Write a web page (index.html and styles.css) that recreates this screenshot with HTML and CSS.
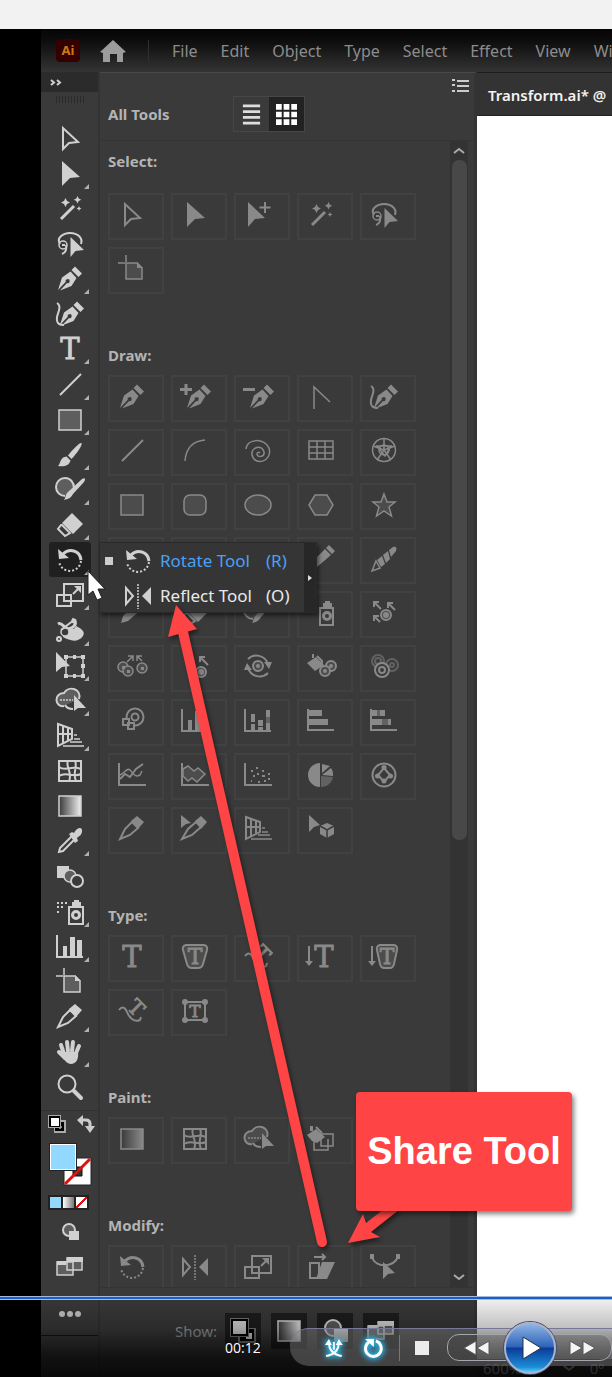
FILE: index.html
```html
<!DOCTYPE html>
<html lang="en">
<head>
    <meta charset="UTF-8">
    <meta name="viewport" content="width=device-width, initial-scale=1.0">
    <title>Transform.ai</title>
    <link rel="stylesheet" href="styles.css">
</head>
<body>

    <svg class="defs" aria-hidden="true">
        <linearGradient id="fade"><stop offset="0" stop-color="#3a3a3a"/><stop offset="1" stop-color="#f0f0f0"/></linearGradient>
        <linearGradient id="fade-dim"><stop offset="0" stop-color="#3a3a3a"/><stop offset="1" stop-color="#8a8a8a"/></linearGradient>
    </svg>

    <!-- icon set, every icon is drawn on a 28x28 grid -->
    <svg class="sprite" aria-hidden="true">
        <symbol id="i-direct" viewBox="0 0 28 28"><path class="s w2" d="M7 3v21l6-6 9-1z"/></symbol>
        <symbol id="i-select" viewBox="0 0 28 28"><path class="f" d="M6 1v25l8-8 10-1z"/></symbol>
        <symbol id="i-group" viewBox="0 0 28 28"><path class="f" d="M4 1v25l7-8 10-1z"/><path class="s w2" d="M21 1v11M15.500 6.500h11"/></symbol>
        <symbol id="i-wand" viewBox="0 0 28 28"><path class="s w3" d="M5 24 18 11"/><path class="f" d="M9.500 3l1.500 3 3 1.500-3 1.500-1.500 3-1.500-3-3-1.500 3-1.500zM21.500 1l1.200 2.500 2.500 1.200-2.500 1.200-1.200 2.500-1.200-2.500-2.500-1.200 2.500-1.200zM23 11l.8 1.700 1.700.8-1.700.8-.8 1.700-.8-1.700-1.700-.8 1.700-.8z"/></symbol>
        <symbol id="i-lasso" viewBox="0 0 28 28"><path class="s w2" d="M4 14C0 8 7 3 14 3c8 0 13 5 11 11"/><circle class="s" cx="7" cy="15" r="4"/><path class="s w2" d="M10 15c1 5-1 8-4 9M6 15h3"/><path class="f" d="M14.500 7v20l5-6 8.500-1z"/></symbol>
        <symbol id="i-pen" viewBox="0 0 28 28"><path class="f" d="M2 25l4-12.500 8.500-6L20.500 13l-5 8L4 25.500l7-7.500a2 2 0 1 0-1.200-1.200zM15.500 5 19 1.500l7 7-3.500 3.500z"/></symbol>
        <symbol id="i-addpen" viewBox="0 0 28 28"><path class="s w3" d="M5 1v11M-1 6.500h12"/><use href="#i-pen" x="4" width="28" height="28"/></symbol>
        <symbol id="i-delpen" viewBox="0 0 28 28"><path class="s w3" d="M-1 6.500h12"/><use href="#i-pen" x="4" width="28" height="28"/></symbol>
        <symbol id="i-anchor" viewBox="0 0 28 28"><path class="s" d="M7 26V4l16 15"/></symbol>
        <symbol id="i-curve" viewBox="0 0 28 28"><path class="s w2" d="M1 3c5 3 1 9 0 14-1 7 3 8 7 8"/><use href="#i-pen" x="2" width="28" height="28"/></symbol>
        <symbol id="i-type" viewBox="0 0 28 28"><text class="t" x="14" y="24" font-size="29">T</text></symbol>
        <symbol id="i-line" viewBox="0 0 28 28"><path class="s w2" d="M4 24 25 3"/></symbol>
        <symbol id="i-arc" viewBox="0 0 28 28"><path class="s" d="M4 24C5 11 12 4 24 3"/></symbol>
        <symbol id="i-spiral" viewBox="0 0 28 28"><path class="s" d="M2 12C3 1 21 1 25 11c4 13-14 19-17 7-1-8 10-11 12-3 1 5-7 6-7 2 0-2 2-2 3-1"/></symbol>
        <symbol id="i-grid" viewBox="0 0 28 28"><path class="s" d="M2 4h24v18H2zM10 4v18M18 4v18M2 10h24M2 16h24"/></symbol>
        <symbol id="i-polar" viewBox="0 0 28 28"><circle class="s" cx="14" cy="13" r="11.500"/><circle class="s" cx="14" cy="13" r="5"/><path class="s" d="M14 13V1M14 13 3 9M14 13l11-4M14 13 7 23M14 13l7 10M7 9l14 0-6 10z"/></symbol>
        <symbol id="i-rect" viewBox="0 0 28 28"><path class="s tint" d="M3 4h22v20H3z"/></symbol>
        <symbol id="i-round" viewBox="0 0 28 28"><rect class="s tint" x="3" y="4" width="22" height="20" rx="6"/></symbol>
        <symbol id="i-ellipse" viewBox="0 0 28 28"><ellipse class="s tint" cx="14" cy="14" rx="13" ry="10"/></symbol>
        <symbol id="i-poly" viewBox="0 0 28 28"><path class="s tint" d="M2 14 8 4h12l6 10-6 10H8z"/></symbol>
        <symbol id="i-star" viewBox="0 0 28 28"><path class="s tint" d="M14 3l3 8h8l-6 5 2.500 9-7.500-5-7.500 5L9 16l-6-5h8z"/></symbol>
        <symbol id="i-brush" viewBox="0 0 28 28"><path class="f" d="M25.500 2c1.500 1.500-5 11-10 16L12 14.500C17 8 24 1 25.500 2zM10.500 15.500l4 4C13 25 8 26 2 25c3-3 2-9 8.500-9.500z"/></symbol>
        <symbol id="i-blob" viewBox="0 0 28 28"><path class="s w2 tint" d="M18 12C18 6 14 2 9 2S0 6 0 11s4 9 9 9"/><path class="f" d="M26 3c3-2 4 0 2 3L17 18c-2 4-5 5-9 6 2-3 1-5 4-8z"/></symbol>
        <symbol id="i-eraser" viewBox="0 0 28 28"><path class="f" d="M16 2 27 13 17 23 6 12z"/><path class="s w2" d="M5 14l-3 4 7 7 5-3-8-8z"/></symbol>
        <symbol id="i-pencil" viewBox="0 0 28 28"><path class="f" d="M18 4l6 6-14 12-7 2 2-7zM19 3l3-3 6 6-3 3z"/></symbol>
        <symbol id="i-crayon" viewBox="0 0 28 28"><path class="f" d="M23 2c3-1 4 0 3 4l-5 6-2-7zM18 6l2 8-4 4-3-8zM12 11l3 8-4 3-4-7z"/><path class="s" d="M6 16l4 7-8 3z"/></symbol>
        <symbol id="i-rotate" viewBox="0 0 28 28"><path class="s w3" d="M7 8c6-6 17-4 18 6"/><path class="f" d="M2 3l1 10 10-1z"/><path class="s w2 dots" d="M25 15c-2 13-19 13-22 1"/></symbol>
        <symbol id="i-reflect" viewBox="0 0 28 28"><path class="s w2" d="M2 6v16l7-8z"/><path class="f" d="M27 5v18l-9-9z"/><path class="s thin" d="M14 2v25"/></symbol>
        <symbol id="i-scale" viewBox="0 0 28 28"><path class="s w2" d="M8 3h19v17H8zM1 14h14v11H1z"/><path class="s w2" d="M17 13l6-6"/><path class="f" d="M18 5h7v7z"/></symbol>
        <symbol id="i-puppet" viewBox="0 0 28 28"><path class="s w3" d="M2 7c5-3 7 9 15 3 5-4 1-7-1-8"/><path class="f" d="M8 14c5-6 9 2 12-5 4 2 10 5 7 10-5 7-13 5-20 1z"/><circle class="s hole" cx="9" cy="15" r="4"/><path class="s w2" d="M5 13 18 3"/><circle class="f" cx="18" cy="4" r="2.500"/><circle class="s w2" cx="3" cy="22" r="2"/></symbol>
        <symbol id="i-free" viewBox="0 0 28 28"><path class="s" d="M10 5h17v19H10z"/><path class="f" d="M8 3h4v4H8zM17 3h3v4h-3zM25 3h4v4h-4zM25 12h4v4h-4zM25 22h4v4h-4zM17 22h3v4h-3zM8 22h4v4H8zM0 0v20l6-5 8-1z"/></symbol>
        <symbol id="i-builder" viewBox="0 0 28 28"><path class="s w2 tint" d="M8 19c-9 2-11-13 0-13 5-8 18-4 15 6M9 18c2 4 5 4 8 4"/><path class="s thin" d="M4 13h13"/><path class="f" d="M18 8v16l4-3 8 0z"/></symbol>
        <symbol id="i-persp" viewBox="0 0 28 28"><path class="s w2" d="M2 2v22l14-7V7zM7 4v17M12 6v12M2 12h14"/><path class="s" d="M18 13h3M18 17h6M14 20h12M7 24h21"/></symbol>
        <symbol id="i-mesh" viewBox="0 0 28 28"><path class="s w2" d="M3 4h22v20H3zM12 4c-3 5 5 12 1 20M19 4c3 6-3 12 1 20M3 10c7 5 12-2 22 2M3 19c7-5 14 2 22-2"/></symbol>
        <symbol id="i-gradient" viewBox="0 0 28 28"><path class="s ramp" d="M3 4h22v20H3z"/></symbol>
        <symbol id="i-dropper" viewBox="0 0 28 28"><path class="s w2" d="M16 9 4 21l-1 4 4-1L19 12z"/><path class="f" d="M13 7l3-2 2 1c3-6 9-7 8-1-1 4-3 4-5 6l1 3-3 2z"/></symbol>
        <symbol id="i-blend" viewBox="0 0 28 28"><path class="f" d="M1 3h12v12H1z"/><circle class="s mid" cx="14" cy="13" r="6"/><circle class="s w2 hole" cx="21" cy="18" r="6"/></symbol>
        <symbol id="i-spray" viewBox="0 0 28 28"><path class="s w2" d="M13 9h14v17H13z"/><circle class="s w3" cx="20" cy="17" r="3.500"/><path class="f" d="M16 4h2V2h5v2h2v4h-9z"/><path class="f" d="M1 4h2v2H1zM5 4h2v2H5zM9 4h2v2H9zM1 8h2v2H1zM5 8h2v2H5zM1 13h2v2H1z"/></symbol>
        <symbol id="i-bottle" viewBox="0 0 28 28"><path class="s w2" d="M13 9h13v17H13z"/><circle class="s w3" cx="20" cy="17" r="3.500"/><path class="f" d="M16 4h2V2h5v2h2v4h-9z"/></symbol>
        <symbol id="i-column" viewBox="0 0 28 28"><path class="s w2" d="M1 2v22h26"/><path class="f" d="M7 13h4v11H7zM14 4h5v20h-5zM21 7h5v17h-5z"/></symbol>
        <symbol id="i-stackcol" viewBox="0 0 28 28"><path class="s w2" d="M1 2v22h26"/><path class="f" d="M7 7h4v8H7zM7 17h4v7H7zM14 13h5v6h-5zM14 20h5v4h-5zM22 3h4v7h-4zM22 16h4v8h-4z"/><path class="f half" d="M22 10h4v6h-4z"/></symbol>
        <symbol id="i-bar" viewBox="0 0 28 28"><path class="s w2" d="M1 2v21h26"/><path class="f" d="M2 3h13v6H2zM2 12h19v6H2z"/></symbol>
        <symbol id="i-stackbar" viewBox="0 0 28 28"><path class="s w2" d="M1 2v21h26"/><path class="f" d="M2 3h5v6H2zM10 3h5v6h-5zM2 12h10v6H2zM18 12h3v6h-3z"/><path class="f half" d="M7 3h3v6H7zM12 12h6v6h-6z"/></symbol>
        <symbol id="i-linegraph" viewBox="0 0 28 28"><path class="s w2" d="M1 2v22h27M2 18l5-5 5 3 6-8 7-5"/><path class="s" d="M2 14c5-2 7-8 10-5s5 8 10 5l2-4"/></symbol>
        <symbol id="i-area" viewBox="0 0 28 28"><path class="s w2" d="M1 2v22h27"/><path class="s mid" d="M2 8l5-3 6 5 4-3 7 6-8 8-5-4-4 3-5-5z"/></symbol>
        <symbol id="i-scatter" viewBox="0 0 28 28"><path class="s w2" d="M1 2v22h27"/><path class="f" d="M7 9h2v2H7zM12 6h2v2h-2zM18 9h2v2h-2zM9 14h2v2H9zM18 14h3v2h-3zM13 12h2v2h-2zM24 12h2v2h-2zM14 20h2v2h-2zM7 19h1v2H7zM20 19h2v2h-2zM24 17h2v2h-2z"/></symbol>
        <symbol id="i-pie" viewBox="0 0 28 28"><path class="f" d="M13 2v24A12 12 0 0 1 13 2zM15 12V3l8 2z"/><path class="f" d="M15 14l9-7c2 3 2 5 2 8z"/><path class="f half" d="M14 15l12 1c-1 6-6 10-12 10z"/></symbol>
        <symbol id="i-radar" viewBox="0 0 28 28"><circle class="s w2" cx="14" cy="14" r="11.500"/><path class="s w2" d="M14 7l6 7-6 7-6-7z"/><circle class="f" cx="14" cy="6.500" r="2.500"/><circle class="f" cx="20.500" cy="15" r="2.500"/><circle class="f" cx="14" cy="20" r="2.500"/><circle class="f" cx="7.500" cy="15" r="2.500"/></symbol>
        <symbol id="i-artboard" viewBox="0 0 28 28"><path class="s" d="M8 0v7M0 8h7"/><path class="s tint" d="M8 8h11l5 5v11H8z"/><path class="f" d="M19 7v6h6z"/></symbol>
        <symbol id="i-slice" viewBox="0 0 28 28"><path class="s w2" d="M14 7 7 14 2 24l10-4 8-7z"/><path class="f" d="M13 6l6-5 7 6-6 7z"/></symbol>
        <symbol id="i-slicesel" viewBox="0 0 28 28"><path class="f" d="M0 0v13l5-4 5-1z"/><path class="s w2" d="M15 7 7 14 1 24l10-4 9-8z"/><path class="f" d="M14 6l6-5 6 6-6 7z"/></symbol>
        <symbol id="i-hand" viewBox="0 0 28 28"><path class="s w4" d="M8 16 5 7M12 13 11 4M16 13l1-9M20 15l3-7M9 20l-6-6"/><path class="f" d="M6 14h16c1 7-2 12-7 12-4 0-7-4-9-8z"/></symbol>
        <symbol id="i-zoom" viewBox="0 0 28 28"><circle class="s w2" cx="11" cy="11" r="8.500"/><path class="s w4" d="M18 18l7 7"/></symbol>
        <symbol id="i-symbols" viewBox="0 0 28 28"><g class="s"><circle class="mid" cx="5" cy="14" r="5"/><circle class="mid" cx="10" cy="18" r="5"/><circle class="mid" cx="24" cy="15" r="5"/><path d="M9 9l6-6M10 3h5v5M24 8l-5-5M19 8V3h5"/></g><path class="f" d="M4 13h3v3H4zM9 17h3v3H9zM23 14h3v3h-3z"/></symbol>
        <symbol id="i-shift" viewBox="0 0 28 28"><g class="s w2"><circle class="mid" cx="16" cy="16" r="5"/><circle class="f" cx="16" cy="16" r="2"/><path d="M11 10 4 3M4 8V3h5M25 11l-7-7M18 9V4h5M10 23l-6-6M4 22v-5h5"/></g></symbol>
        <symbol id="i-sizer" viewBox="0 0 28 28"><g class="s w2"><circle class="mid" cx="20" cy="19" r="5"/><circle class="f" cx="20" cy="19" r="2"/><path d="M27 12l-8-8M19 9V4h5M10 15V8"/></g></symbol>
        <symbol id="i-spin" viewBox="0 0 28 28"><g class="s w2"><circle class="mid" cx="14" cy="13" r="5"/><circle class="f" cx="14" cy="13" r="1"/><path d="M4 6c6-6 17-4 20 5M24 20c-6 6-17 4-20-5"/></g><path class="f" d="M20 9h8l-3 7zM0 17l3-7 5 7z"/></symbol>
        <symbol id="i-stain" viewBox="0 0 28 28"><path class="f" d="M0 10 9 4l8 8-9 6zM5 1h2v4H5z"/><path class="s w2" d="M10 3l5 5v6"/><g class="s w2"><circle class="mid" cx="24" cy="13" r="5"/><circle class="mid" cx="18" cy="18" r="5"/><circle cx="24" cy="13" r="1"/><circle cx="18" cy="18" r="1"/></g></symbol>
        <symbol id="i-screen" viewBox="0 0 28 28"><g class="s w2"><g class="half"><circle cx="8" cy="8" r="6"/><circle cx="8" cy="8" r="3"/><circle cx="22" cy="12" r="6"/><circle cx="22" cy="12" r="2"/></g><circle class="hole" cx="12" cy="17" r="7"/><circle cx="12" cy="17" r="3"/></g></symbol>
        <symbol id="i-style" viewBox="0 0 28 28"><g class="s w2"><circle cx="17" cy="10" r="8.500"/><circle cx="17" cy="10" r="3.500"/><path class="hole" d="M5 12h6v6H5zM10 16h6v6h-6z"/></g></symbol>
        <symbol id="i-perspsel" viewBox="0 0 28 28"><path class="f" d="M2 0v17l5-5 6-2zM20 8l7 3v8l-7 4-7-4v-8z"/><path class="s line" d="M13 11l7 4 7-4M20 15v8"/></symbol>
        <symbol id="i-areatype" viewBox="0 0 28 28"><path class="s w2 tint" d="M5 2h18q4 1 3 5l-4 14q-1 4-5 4h-6q-4 0-5-4L2 7q-1-4 3-5z"/><text class="t" x="14" y="21" font-size="22">T</text></symbol>
        <symbol id="i-pathtype" viewBox="0 0 28 28"><path class="s w2" d="M1 13c3-4 6-3 8 2s7 11 13 8l1-3"/><text class="t" x="18" y="18" font-size="21" transform="rotate(45 18 11)">T</text></symbol>
        <symbol id="i-vtype" viewBox="0 0 28 28"><path class="s w2" d="M2 3v19"/><path class="f" d="M-2 18h8l-4 5z"/><text class="t" x="17" y="24" font-size="29">T</text></symbol>
        <symbol id="i-vareatype" viewBox="0 0 28 28"><path class="s w2" d="M2 3v19"/><path class="f" d="M-2 18h8l-4 5z"/><path class="s w2 tint" d="M10 2h14q4 1 3 5l-3 14q-1 4-4 4h-6q-3 0-4-4L7 7q-1-4 3-5z"/><text class="t" x="17" y="21" font-size="22">T</text></symbol>
        <symbol id="i-touch" viewBox="0 0 28 28"><path class="s w2" d="M4 5h20v18H4z"/><circle class="f" cx="4" cy="5" r="3"/><circle class="f" cx="24" cy="5" r="3"/><circle class="f" cx="4" cy="23" r="3"/><circle class="f" cx="24" cy="23" r="3"/><text class="t" x="14" y="20" font-size="17">T</text></symbol>
        <symbol id="i-bucket" viewBox="0 0 28 28"><path class="s" d="M14 9h12v12H14zM7 14v11h14V14"/><path class="f" d="M0 10 9 4l9 8-8 6-5-2zM3 1h3v5H3z"/><path class="s w2" d="M9 2l6 6"/></symbol>
        <symbol id="i-shear" viewBox="0 0 28 28"><path class="s w2" d="M3 10h9v15H3zM7 4h11M15 1l3 3-3 3"/><path class="f" d="M15 9h13l-8 17H9z"/></symbol>
        <symbol id="i-reshape" viewBox="0 0 28 28"><path class="s w2" d="M2 4c3 11 21 11 26 0"/><path class="f" d="M0 1h4v5H0zM26 1h4v5h-4zM13 9v17l5-5 7-1z"/></symbol>
        <symbol id="i-modes" viewBox="0 0 28 28"><circle class="s w2 tint" cx="13" cy="12" r="6"/><path class="f" d="M13 13h10v9H13z"/></symbol>
        <symbol id="i-screens" viewBox="0 0 28 28"><path class="s tint" d="M1 9h16v13H1zM11 5h15v12H11z"/><path class="f" d="M1 8h9v4H1zM11 4h16v5H11z"/></symbol>
        <symbol id="i-stack" viewBox="0 0 28 28"><path d="M13 11h14v15H9v-7z" fill="#777"/><path d="M14 12h11v12H11v-6z" fill="#000"/><path class="f" d="M23 22h-6v-3h3v-3h3z"/><path fill="#777" d="M1 1h19v19H1z"/><path fill="#000" d="M2 2h17v17H2z"/><path class="f" d="M4 4h13v13H4z"/></symbol>
    </svg>

    <main class="player">
        <div class="app">
            <header class="menubar">
                <span class="logo">Ai</span>
                <a class="home" href="#" aria-label="Home"><svg viewBox="0 0 26 22"><path d="M13 0 26 12l-3 1v9h-6v-8h-7v8H3v-9l-3-1z" fill="currentColor"/></svg></a>
                <nav class="menu">
                    <a href="#">File</a><a href="#">Edit</a><a href="#">Object</a><a href="#">Type</a><a href="#">Select</a><a href="#">Effect</a><a href="#">View</a><a href="#">Window</a>
                </nav>
            </header>

            <div class="workspace">
                <aside class="rail">
                    <div class="rail-top"><svg viewBox="0 0 12 7"><path class="s w2" d="M1 1l3 2.500L1 6M7 1l3 2.500L7 6"/></svg></div>
                    <div class="grip"></div>
                    <div class="tools">
                        <button class="tool" aria-label="Direct selection"><svg><use href="#i-direct"/></svg></button>
                        <button class="tool more" aria-label="Selection"><svg><use href="#i-select"/></svg></button>
                        <button class="tool" aria-label="Magic wand"><svg><use href="#i-wand"/></svg></button>
                        <button class="tool" aria-label="Lasso"><svg><use href="#i-lasso"/></svg></button>
                        <button class="tool more" aria-label="Pen"><svg><use href="#i-pen"/></svg></button>
                        <button class="tool" aria-label="Curvature"><svg><use href="#i-curve"/></svg></button>
                        <button class="tool more" aria-label="Type"><svg><use href="#i-type"/></svg></button>
                        <button class="tool more" aria-label="Line"><svg><use href="#i-line"/></svg></button>
                        <button class="tool more" aria-label="Rectangle"><svg><use href="#i-rect"/></svg></button>
                        <button class="tool more" aria-label="Paintbrush"><svg><use href="#i-brush"/></svg></button>
                        <button class="tool more" aria-label="Blob brush"><svg><use href="#i-blob"/></svg></button>
                        <button class="tool more" aria-label="Eraser"><svg><use href="#i-eraser"/></svg></button>
                        <div class="tool-wrap">
                            <button class="tool more active" aria-label="Rotate"><svg><use href="#i-rotate"/></svg></button>
                            <div class="flyout">
                                <div class="flyout-list">
                                    <button class="flyout-item current"><i class="mark"></i><svg><use href="#i-rotate"/></svg><span>Rotate Tool</span><kbd>(R)</kbd></button>
                                    <button class="flyout-item"><i class="mark"></i><svg><use href="#i-reflect"/></svg><span>Reflect Tool</span><kbd>(O)</kbd></button>
                                </div>
                                <button class="tearoff" aria-label="Tear off"></button>
                            </div>
                            <svg class="cursor" viewBox="0 0 18 31"><path d="M1 1v24l5-4 4 9 5-2-4-9h7z" fill="#fff" stroke="#222"/></svg>
                        </div>
                        <button class="tool more" aria-label="Scale"><svg><use href="#i-scale"/></svg></button>
                        <button class="tool more" aria-label="Puppet warp"><svg><use href="#i-puppet"/></svg></button>
                        <button class="tool more" aria-label="Free transform"><svg><use href="#i-free"/></svg></button>
                        <button class="tool more" aria-label="Shape builder"><svg><use href="#i-builder"/></svg></button>
                        <button class="tool more" aria-label="Perspective grid"><svg><use href="#i-persp"/></svg></button>
                        <button class="tool" aria-label="Mesh"><svg><use href="#i-mesh"/></svg></button>
                        <button class="tool" aria-label="Gradient"><svg><use href="#i-gradient"/></svg></button>
                        <button class="tool more" aria-label="Eyedropper"><svg><use href="#i-dropper"/></svg></button>
                        <button class="tool" aria-label="Blend"><svg><use href="#i-blend"/></svg></button>
                        <button class="tool more" aria-label="Symbol sprayer"><svg><use href="#i-spray"/></svg></button>
                        <button class="tool more" aria-label="Column graph"><svg><use href="#i-column"/></svg></button>
                        <button class="tool" aria-label="Artboard"><svg><use href="#i-artboard"/></svg></button>
                        <button class="tool more" aria-label="Slice"><svg><use href="#i-slice"/></svg></button>
                        <button class="tool more" aria-label="Hand"><svg><use href="#i-hand"/></svg></button>
                        <button class="tool" aria-label="Zoom"><svg><use href="#i-zoom"/></svg></button>
                    </div>
                    <div class="colors">
                        <div class="color-row">
                            <button aria-label="Default colors"><svg viewBox="0 0 18 18"><path d="M7 5h11v13H6V8z" fill="#aaa"/><path d="M7 7h9v9H7z" fill="#000"/><path d="M11 13h2v-2" stroke="#fff" fill="none"/><path d="M0 0h13v13H0z" fill="#aaa"/><path d="M1 1h11v11H1z" fill="#000"/><path d="M3 3h8v8H3z" fill="#fff"/></svg></button>
                            <button aria-label="Swap colors"><svg viewBox="0 0 18 18"><path d="M4 5h5q4 0 4 4v3" fill="none" stroke="#ccc" stroke-width="3"/><path d="M6 0v11L0 5zM8 11h10l-5 7z" fill="#ccc"/></svg></button>
                        </div>
                        <svg class="fill-stroke" viewBox="0 0 44 44"><path d="M16 16h27v27H16z" fill="#fff" stroke="#222"/><path d="M25 25h9v9h-9z" fill="#333" stroke="#111"/><path d="M17 42 42 17" stroke="#e01010" stroke-width="3"/><path d="M1 1h28v28H1z" fill="#222"/><path d="M2 2h26v26H2z" fill="#fff"/><path d="M3 3h24v24H3z" fill="#93d8ff"/></svg>
                        <div class="chips"><i class="chip solid"></i><i class="chip grad"></i><i class="chip none"></i></div>
                    </div>
                    <div class="rail-end">
                        <button class="tool" aria-label="Drawing modes"><svg><use href="#i-modes"/></svg></button>
                        <button class="tool" aria-label="Screen modes"><svg><use href="#i-screens"/></svg></button>
                    </div>
                    <button class="dots-btn" aria-label="Edit toolbar"><i></i><i></i><i></i></button>
                </aside>

                <section class="panel">
                    <div class="panel-head">
                        <h2>All Tools</h2>
                        <div class="views">
                            <button aria-label="List view"><svg viewBox="0 0 22 22"><path d="M2 2h18M2 8h18M2 14h18M2 20h18" stroke="#ddd" stroke-width="3"/></svg></button>
                            <button class="on" aria-label="Grid view"><svg viewBox="0 0 22 22"><path d="M0 0h6v6H0zM8 0h6v6H8zM16 0h6v6h-6zM0 8h6v6H0zM8 8h6v6H8zM16 8h6v6h-6zM0 16h6v6H0zM8 16h6v6H8zM16 16h6v6h-6z" fill="#fff"/></svg></button>
                        </div>
                        <button class="panel-menu" aria-label="Panel menu"><svg viewBox="0 0 17 13"><path d="M0 1h3M0 6h3M0 12h3M5 2h12M5 7h12M5 12h12" stroke="#ccc" stroke-width="2"/></svg></button>
                    </div>
                    <div class="panel-body">
                        <div class="groups">
                            <section class="group first">
                                <h3>Select:</h3>
                                <div class="cells">
                                    <button aria-label="Direct selection"><svg><use href="#i-direct"/></svg></button>
                                    <button aria-label="Selection"><svg><use href="#i-select"/></svg></button>
                                    <button aria-label="Group selection"><svg><use href="#i-group"/></svg></button>
                                    <button aria-label="Magic wand"><svg><use href="#i-wand"/></svg></button>
                                    <button aria-label="Lasso"><svg><use href="#i-lasso"/></svg></button>
                                    <button aria-label="Artboard"><svg><use href="#i-artboard"/></svg></button>
                                </div>
                            </section>
                            <section class="group">
                                <h3>Draw:</h3>
                                <div class="cells">
                                    <button aria-label="Pen"><svg><use href="#i-pen"/></svg></button>
                                    <button aria-label="Add anchor point"><svg><use href="#i-addpen"/></svg></button>
                                    <button aria-label="Delete anchor point"><svg><use href="#i-delpen"/></svg></button>
                                    <button aria-label="Anchor point"><svg><use href="#i-anchor"/></svg></button>
                                    <button aria-label="Curvature"><svg><use href="#i-curve"/></svg></button>
                                    <button aria-label="Line"><svg><use href="#i-line"/></svg></button>
                                    <button aria-label="Arc"><svg><use href="#i-arc"/></svg></button>
                                    <button aria-label="Spiral"><svg><use href="#i-spiral"/></svg></button>
                                    <button aria-label="Rectangular grid"><svg><use href="#i-grid"/></svg></button>
                                    <button aria-label="Polar grid"><svg><use href="#i-polar"/></svg></button>
                                    <button aria-label="Rectangle"><svg><use href="#i-rect"/></svg></button>
                                    <button aria-label="Rounded rectangle"><svg><use href="#i-round"/></svg></button>
                                    <button aria-label="Ellipse"><svg><use href="#i-ellipse"/></svg></button>
                                    <button aria-label="Polygon"><svg><use href="#i-poly"/></svg></button>
                                    <button aria-label="Star"><svg><use href="#i-star"/></svg></button>
                                    <button aria-label="Flare"><svg><use href="#i-star"/></svg></button>
                                    <button aria-label="Paintbrush"><svg><use href="#i-brush"/></svg></button>
                                    <button aria-label="Blob brush"><svg><use href="#i-blob"/></svg></button>
                                    <button aria-label="Pencil"><svg><use href="#i-pencil"/></svg></button>
                                    <button aria-label="Shaper"><svg><use href="#i-crayon"/></svg></button>
                                    <button aria-label="Smooth"><svg><use href="#i-pencil"/></svg></button>
                                    <button aria-label="Path eraser"><svg><use href="#i-eraser"/></svg></button>
                                    <button aria-label="Join"><svg><use href="#i-blob"/></svg></button>
                                    <button aria-label="Symbol sprayer"><svg><use href="#i-bottle"/></svg></button>
                                    <button aria-label="Symbol shifter"><svg><use href="#i-shift"/></svg></button>
                                    <button aria-label="Symbol scruncher"><svg><use href="#i-symbols"/></svg></button>
                                    <button aria-label="Symbol sizer"><svg><use href="#i-sizer"/></svg></button>
                                    <button aria-label="Symbol spinner"><svg><use href="#i-spin"/></svg></button>
                                    <button aria-label="Symbol stainer"><svg><use href="#i-stain"/></svg></button>
                                    <button aria-label="Symbol screener"><svg><use href="#i-screen"/></svg></button>
                                    <button aria-label="Symbol styler"><svg><use href="#i-style"/></svg></button>
                                    <button aria-label="Column graph"><svg><use href="#i-column"/></svg></button>
                                    <button aria-label="Stacked column graph"><svg><use href="#i-stackcol"/></svg></button>
                                    <button aria-label="Bar graph"><svg><use href="#i-bar"/></svg></button>
                                    <button aria-label="Stacked bar graph"><svg><use href="#i-stackbar"/></svg></button>
                                    <button aria-label="Line graph"><svg><use href="#i-linegraph"/></svg></button>
                                    <button aria-label="Area graph"><svg><use href="#i-area"/></svg></button>
                                    <button aria-label="Scatter graph"><svg><use href="#i-scatter"/></svg></button>
                                    <button aria-label="Pie graph"><svg><use href="#i-pie"/></svg></button>
                                    <button aria-label="Radar graph"><svg><use href="#i-radar"/></svg></button>
                                    <button aria-label="Slice"><svg><use href="#i-slice"/></svg></button>
                                    <button aria-label="Slice selection"><svg><use href="#i-slicesel"/></svg></button>
                                    <button aria-label="Perspective grid"><svg><use href="#i-persp"/></svg></button>
                                    <button aria-label="Perspective selection"><svg><use href="#i-perspsel"/></svg></button>
                                </div>
                            </section>
                            <section class="group">
                                <h3>Type:</h3>
                                <div class="cells">
                                    <button aria-label="Type"><svg><use href="#i-type"/></svg></button>
                                    <button aria-label="Area type"><svg><use href="#i-areatype"/></svg></button>
                                    <button aria-label="Type on a path"><svg><use href="#i-pathtype"/></svg></button>
                                    <button aria-label="Vertical type"><svg><use href="#i-vtype"/></svg></button>
                                    <button aria-label="Vertical area type"><svg><use href="#i-vareatype"/></svg></button>
                                    <button aria-label="Vertical type on a path"><svg><use href="#i-pathtype"/></svg></button>
                                    <button aria-label="Touch type"><svg><use href="#i-touch"/></svg></button>
                                </div>
                            </section>
                            <section class="group">
                                <h3>Paint:</h3>
                                <div class="cells">
                                    <button aria-label="Gradient"><svg><use href="#i-gradient"/></svg></button>
                                    <button aria-label="Mesh"><svg><use href="#i-mesh"/></svg></button>
                                    <button aria-label="Shape builder"><svg><use href="#i-builder"/></svg></button>
                                    <button aria-label="Live paint bucket"><svg><use href="#i-bucket"/></svg></button>
                                </div>
                            </section>
                            <section class="group">
                                <h3>Modify:</h3>
                                <div class="cells">
                                    <button aria-label="Rotate"><svg><use href="#i-rotate"/></svg></button>
                                    <button aria-label="Reflect"><svg><use href="#i-reflect"/></svg></button>
                                    <button aria-label="Scale"><svg><use href="#i-scale"/></svg></button>
                                    <button aria-label="Shear"><svg><use href="#i-shear"/></svg></button>
                                    <button aria-label="Reshape"><svg><use href="#i-reshape"/></svg></button>
                                </div>
                            </section>
                        </div>
                        <div class="scrollbar">
                            <svg viewBox="0 0 12 7"><path class="s w2" d="M1 6l5-4 5 4"/></svg>
                            <div class="thumb"></div>
                            <svg viewBox="0 0 12 7"><path class="s w2" d="M1 1l5 4 5-4"/></svg>
                        </div>
                    </div>
                    <div class="panel-foot">
                        <span>Show:</span>
                        <button aria-label="Fill and stroke"><svg><use href="#i-stack"/></svg></button>
                        <button aria-label="Color mode"><svg><use href="#i-gradient"/></svg></button>
                        <button aria-label="Drawing modes"><svg viewBox="0 0 28 28"><circle class="s w2 tint" cx="12" cy="11" r="8"/><path class="f" d="M13 12h14v13H13z"/></svg></button>
                        <button aria-label="Screen modes"><svg><use href="#i-screens"/></svg></button>
                    </div>
                </section>

                <section class="document">
                    <div class="tab">Transform.ai* @</div>
                    <div class="canvas"></div>
                    <div class="status"><span>600%</span><svg viewBox="0 0 12 7"><path class="s w2" d="M1 1l5 4 5-4"/></svg><span>0º</span></div>
                </section>
            </div>
        </div>

        <!-- red marks over the frame -->
        <svg class="marks" viewBox="0 0 612 1348" aria-hidden="true">
            <g fill="#fe4444">
                <path d="M322 1213 183 603" stroke="#fe4444" stroke-width="10" stroke-linecap="round"/>
                <path d="M176 576 197 600 168 608z"/>
                <path d="M348 1214 363 1185 366 1194 384 1180H400L371 1203 380 1208z"/>
            </g>
        </svg>
        <div class="callout">Share Tool</div>

        <div class="player-bar">
            <div class="seek"></div>
            <time>00:12</time>
            <div class="controls">
                <button class="glow" aria-label="Shuffle"><svg viewBox="0 0 22 22"><path d="M3 19h2C12 17 16 12 16 6M19 19h-2C10 17 6 12 6 6M11 13V5" fill="none" stroke="#fff" stroke-width="2"/><path d="M2 8l4-6 3 6zM20 8l-4-6-3 6z" fill="#fff"/></svg></button>
                <button class="glow" aria-label="Repeat"><svg viewBox="0 0 22 22"><path d="M14 4a8 8 0 1 1-7 1" fill="none" stroke="#fff" stroke-width="3"/><path d="M3 2h9v8z" fill="#fff"/></svg></button>
                <i class="sep"></i>
                <button class="stop" aria-label="Stop"></button>
                <button class="skip back" aria-label="Rewind"><svg viewBox="0 0 26 14"><path d="M12 0v14L0 7zM25 0v14L13 7z" fill="#f4f4f4" stroke="#555"/></svg></button>
                <button class="play" aria-label="Play"><svg viewBox="0 0 20 24"><path d="M1 1v22l18-11z" fill="#fff" stroke="#234"/></svg></button>
                <button class="skip next" aria-label="Fast forward"><svg viewBox="0 0 26 14"><path d="M1 0v14l12-7zM14 0v14l12-7z" fill="#f4f4f4" stroke="#555"/></svg></button>
            </div>
        </div>
    </main>

</body>
</html>
```
FILE: styles.css
```css
:root {
    --panel: #3a3a3a;
    --dark: #222;
    --line: #464646;
    --icon: #d0d0d0;
    --icon-dim: #898989;
    --tint: #5e5e5e;
    --ramp: url(#fade);
    --red: #fe4444;
    --font: "Noto Sans", "Open Sans", sans-serif;
}

* {
    margin: 0;
    padding: 0;
    box-sizing: border-box;
}

body {
    background: #f2f2f2;
    font-family: var(--font);
    padding-top: 29px;
}

button {
    background: none;
    border: none;
    color: inherit;
    font: inherit;
    cursor: pointer;
}

a {
    color: inherit;
    text-decoration: none;
}

svg {
    display: block;
    overflow: visible;
}

.defs {
    position: absolute;
    width: 0;
    height: 0;
}
.sprite {
    display: none;
}

/* icon strokes and fills */
symbol {
    overflow: visible;
}
.s {
    fill: none;
    stroke: currentColor;
    stroke-width: 1.5;
}
.f { fill: currentColor; }
.w2 { stroke-width: 2; }
.w3 { stroke-width: 3; }
.w4 { stroke-width: 4; stroke-linecap: round; }
.thin { stroke-width: 1.5; stroke-dasharray: 2 1; }
.dots { stroke-dasharray: 2 2; }
.tint { fill: var(--tint); }
.ramp { fill: var(--ramp); }
.mid { fill: var(--tint); }
.hole { fill: var(--panel); }
.half { opacity: 0.5; }
.line { stroke: var(--panel); }
.t {
    fill: currentColor;
    stroke: currentColor;
    stroke-width: 0.8;
    font-family: "DejaVu Serif", serif;
    text-anchor: middle;
}

/* frame */
.player {
    position: relative;
    height: calc(100vh - 29px);
    min-height: 700px;
    padding-left: 41px;
    background: #000;
    overflow: hidden;
}

.app {
    display: flex;
    flex-direction: column;
    height: 100%;
    background: var(--panel);
}

.menubar {
    display: flex;
    align-items: center;
    flex: none;
    height: 43px;
    padding-left: 15px;
    background: linear-gradient(#050505, #0e0e0e 30%, #343434);
    overflow: hidden;
}

.logo {
    flex: none;
    width: 24px;
    height: 23px;
    border-radius: 4px;
    background: #340000;
    color: #cc7a10;
    font-size: 13px;
    font-weight: 700;
    line-height: 22px;
    text-align: center;
}

.home {
    margin-left: 20px;
    padding-right: 22px;
    border-right: 1px solid #303030;
    color: #9c9c9c;
}
.home svg {
    width: 26px;
    height: 22px;
}

.menu {
    display: flex;
    gap: 23px;
    margin-left: 23px;
    color: #8c8c8c;
    font-size: 16px;
    white-space: nowrap;
}

.workspace {
    display: flex;
    flex: 1;
    min-height: 0;
}

/* toolbar */
.rail {
    display: flex;
    flex-direction: column;
    flex: none;
    width: 59px;
    border-right: 2px solid #333;
    color: var(--icon);
}

.rail-top {
    height: 20px;
    padding: 7px 9px;
    background: #2b2b2b;
}
.rail-top svg {
    width: 12px;
    height: 7px;
}

.grip {
    width: 28px;
    height: 7px;
    margin: 4px 15px 18px;
    background: repeating-linear-gradient(90deg, #2b2b2b 0 1px, transparent 1px 3px);
}

.tools {
    display: flex;
    flex-direction: column;
    padding: 0 8px;
}
.tools > :nth-child(7n) {
    margin-bottom: 1px;
}

.tool {
    display: flex;
    align-items: center;
    justify-content: center;
    position: relative;
    width: 42px;
    height: 35px;
    border-radius: 3px;
}
.tool svg,
.flyout-item svg,
.panel-foot svg {
    width: 28px;
    height: 28px;
}
.tool.active {
    background: #202020;
}
.tool.more::after {
    content: "";
    position: absolute;
    right: 2px;
    bottom: 2px;
    border-left: 5px solid transparent;
    border-bottom: 5px solid #b0b0b0;
}

.tool-wrap {
    position: relative;
}

.flyout {
    display: flex;
    position: absolute;
    z-index: 3;
    left: 50px;
    top: 0;
    width: 218px;
    height: 71px;
    border: 1px solid #2a2a2a;
    background: #353535;
    box-shadow: 2px 3px 4px rgba(0, 0, 0, 0.5);
}
.flyout-list {
    flex: 1;
}
.flyout-item {
    display: grid;
    grid-template-columns: 8px 31px 98px 1fr;
    column-gap: 8px;
    align-items: center;
    width: 100%;
    height: 35px;
    padding-left: 5px;
    color: #e8e8e8;
    font-size: 17px;
    text-align: left;
    white-space: nowrap;
}
.flyout-item svg {
    color: var(--icon);
    margin-left: 3px;
}
.flyout-item kbd {
    font: inherit;
}
.flyout-item.current {
    color: #4ba0f5;
}
.current .mark {
    width: 8px;
    height: 8px;
    background: #ccc;
}
.tearoff {
    display: flex;
    align-items: center;
    justify-content: center;
    width: 12px;
    background: #272727;
}
.tearoff::before {
    content: "";
    border: 3px solid transparent;
    border-left: 4px solid #ddd;
    border-right: 0;
}

.cursor {
    position: absolute;
    z-index: 4;
    left: 38px;
    top: 28px;
    width: 18px;
    height: 31px;
}

.colors {
    margin-top: 5px;
    padding: 4px 7px 0;
    border-top: 1px solid #303030;
}
.color-row {
    display: flex;
    align-items: flex-start;
    justify-content: space-between;
    height: 27px;
    margin-right: -4px;
}
.color-row svg {
    width: 18px;
    height: 18px;
}
.fill-stroke {
    width: 44px;
    height: 44px;
}
.chips {
    display: flex;
    margin-top: 9px;
    width: 41px;
    border: 1px solid #222;
}
.chip {
    flex: 1;
    height: 13px;
    border: 1px solid #222;
}
.solid { background: #93d8ff; }
.grad { background: linear-gradient(90deg, #fff, #777); }
.none { background: linear-gradient(135deg, #fff 42%, #e01010 42% 58%, #fff 58%); }

.rail-end {
    display: flex;
    flex-direction: column;
    padding: 4px 8px 0;
}

.dots-btn {
    display: flex;
    align-items: center;
    justify-content: center;
    gap: 2px;
    height: 52px;
    padding-top: 8px;
    border-bottom: 1px solid #141414;
}
.dots-btn i {
    width: 6px;
    height: 6px;
    border-radius: 50%;
    background: #ccc;
}

/* all tools panel */
.panel {
    display: flex;
    flex-direction: column;
    flex: none;
    width: 377px;
    border-top: 1px solid #484848;
    border-right: 3px solid #343434;
    color: #b4b4b4;
}

.panel-head {
    display: flex;
    position: relative;
    height: 68px;
    padding: 23px 8px 0;
    border-bottom: 1px solid #343434;
}
.panel h2,
.panel h3 {
    font-size: 15px;
    font-weight: 700;
    line-height: 20px;
}
.panel h2 {
    width: 125px;
    line-height: 36px;
}
.views {
    display: flex;
    height: 36px;
    border: 1px solid var(--line);
}
.views button {
    display: flex;
    align-items: center;
    justify-content: center;
    width: 35px;
}
.views .on {
    background: var(--dark);
}
.views svg {
    width: 21px;
    height: 21px;
}
.panel-menu {
    position: absolute;
    right: 5px;
    top: 6px;
}
.panel-menu svg {
    width: 17px;
    height: 13px;
}

.panel-body {
    display: flex;
    justify-content: space-between;
    flex: 1;
    min-height: 0;
}
.groups {
    padding: 10px 8px 0;
    overflow: hidden;
}
.group {
    margin-bottom: 51px;
}
.group h3 {
    margin-bottom: 10px;
}
.group.first h3 {
    margin-bottom: 22px;
}
.cells {
    --tint: #4c4c4c;
    --ramp: url(#fade-dim);
    display: grid;
    grid-template-columns: repeat(5, 56px);
    grid-auto-rows: 47px;
    gap: 7px;
}
.cells button {
    display: flex;
    align-items: flex-start;
    padding: 6px 0 0 8px;
    border: 2px solid #414141;
    color: var(--icon-dim);
}
.cells svg {
    width: 28px;
    height: 28px;
}

.scrollbar {
    display: flex;
    flex-direction: column;
    align-items: center;
    width: 18px;
    margin-right: 6px;
    padding: 6px 0;
    background: #333;
    color: #aaa;
}
.scrollbar svg {
    width: 12px;
    height: 7px;
}
.thumb {
    width: 15px;
    height: 60%;
    margin: 6px 0 auto;
    border-radius: 7px;
    background: #484848;
}

.panel-foot {
    display: flex;
    align-items: flex-start;
    flex: none;
    gap: 10px;
    height: 90px;
    padding: 25px 0 0 75px;
    border-top: 1px solid #343434;
}
.panel-foot span {
    width: 40px;
    font-size: 15px;
    line-height: 36px;
    color: #9a9a9a;
}
.panel-foot button {
    display: flex;
    align-items: center;
    justify-content: center;
    width: 36px;
    height: 36px;
    background: #1e1e1e;
    color: #ddd;
}

/* document window */
.document {
    display: flex;
    flex-direction: column;
    flex: 1;
    min-width: 0;
    background: #fff;
}
.tab {
    height: 44px;
    padding-left: 11px;
    border-top: 1px solid #1e1e1e;
    border-bottom: 1px solid #222;
    background: #333;
    color: #f2f2f2;
    font-size: 15px;
    font-weight: 600;
    line-height: 44px;
    white-space: nowrap;
    overflow: hidden;
}
.canvas {
    flex: 1;
}
.status {
    display: flex;
    align-items: center;
    justify-content: space-between;
    height: 18px;
    padding: 0 8px 0 6px;
    background: #333;
    color: #ddd;
    font-size: 15px;
    line-height: 18px;
}
.status svg {
    width: 12px;
    height: 7px;
    margin-left: 28px;
}

/* annotations */
.marks {
    position: absolute;
    z-index: 5;
    left: 0;
    top: 0;
    width: 612px;
    height: 1348px;
    pointer-events: none;
    filter: drop-shadow(2px 3px 2px rgba(0, 0, 0, 0.45));
}
.callout {
    position: absolute;
    z-index: 6;
    left: 356px;
    top: 1063px;
    width: 216px;
    border-radius: 4px;
    background: var(--red);
    box-shadow: 2px 3px 5px rgba(0, 0, 0, 0.5);
    color: #fff;
    font: bold 38px/119px "Liberation Sans", Arial, sans-serif;
    text-align: center;
    white-space: nowrap;
}

/* video controls */
.player-bar {
    position: absolute;
    z-index: 7;
    left: 0;
    right: 0;
    bottom: 0;
    height: 81px;
    background: linear-gradient(rgba(0, 0, 0, 0.04), rgba(0, 0, 0, 0.25) 40%, rgba(0, 0, 0, 0.7) 75%, rgba(0, 0, 0, 0.85));
    color: #fff;
}
.seek {
    height: 4px;
    border: solid #9fbbe0;
    border-width: 1px 0;
    background: #1f5fc4;
}
.player-bar time {
    position: absolute;
    left: 225px;
    top: 42px;
    font: 14px/20px "Open Sans", sans-serif;
}
.controls {
    display: flex;
    align-items: center;
    position: absolute;
    left: 290px;
    right: 0;
    bottom: 11px;
    height: 38px;
    padding-left: 33px;
    border-top: 1px solid #77779a;
    border-radius: 19px 0 0 19px;
    background: linear-gradient(rgba(150, 150, 150, 0.35), rgba(110, 110, 110, 0.55));
}
.glow {
    width: 22px;
    margin-right: 17px;
    filter: drop-shadow(0 0 3px #27b8ee) drop-shadow(0 0 2px #27b8ee);
}
.sep {
    width: 2px;
    height: 26px;
    margin-left: -2px;
    background: #777;
}
.stop {
    width: 14px;
    height: 14px;
    margin: 0 18px 0 15px;
    background: #ececec;
}
.skip {
    display: flex;
    align-items: center;
    justify-content: center;
    width: 60px;
    height: 27px;
    border: 1px solid #a5a5ad;
    background: rgba(70, 70, 70, 0.3);
}
.skip svg {
    width: 26px;
    height: 14px;
}
.back { border-radius: 12px 0 0 12px; }
.next { border-radius: 0 12px 12px 0; }
.play {
    display: flex;
    align-items: center;
    justify-content: center;
    flex: none;
    width: 52px;
    height: 52px;
    margin: 0 -3px;
    padding-left: 5px;
    z-index: 1;
    border: 2px solid #a9b4cc;
    border-radius: 50%;
    background: linear-gradient(#8fb4e4, #2c62b8 48%, #0b3a96 50%, #1b8ed8 90%, #4cd2ff);
    box-shadow: 0 0 0 1px #444c70;
}
.play svg {
    width: 20px;
    height: 24px;
}
```
